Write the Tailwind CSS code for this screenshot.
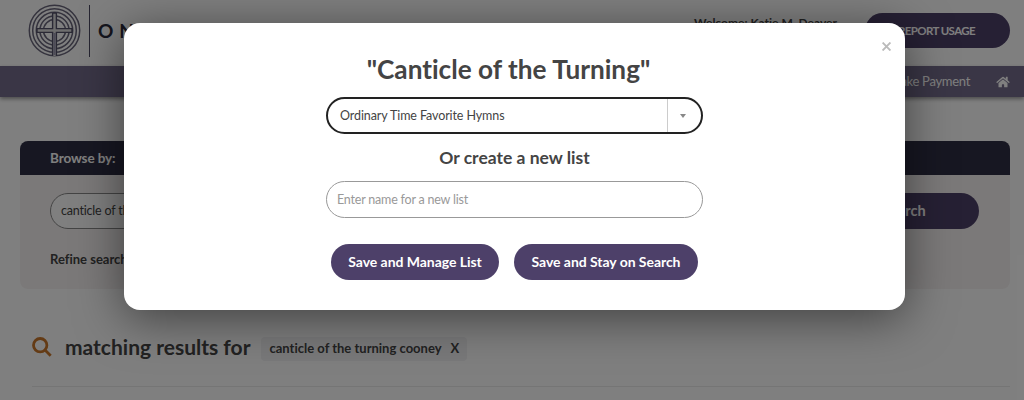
<!DOCTYPE html>
<html lang="en">
<head>
  <meta charset="UTF-8" />
  <meta name="viewport" content="width=device-width, initial-scale=1.0"/>
  <title>Add to List</title>
  <script src="https://cdn.jsdelivr.net/npm/@tailwindcss/browser@4"></script>
</head>
<body class="h-[400px] overflow-hidden bg-white font-['Lato',sans-serif] text-[#444] [font-variant-ligatures:none]">

  <!-- Header -->
  <header class="flex h-[66px] items-start justify-between pl-7 pr-[14px]">
    <div class="flex items-center pt-1">
      <svg class="size-[53px]" viewBox="0 0 53 53" fill="none" stroke="#6a677c">
        <g stroke-width="1.5">
          <circle cx="26.5" cy="26.5" r="25.2"/>
          <circle cx="26.5" cy="26.5" r="21.8"/>
          <circle cx="26.5" cy="26.5" r="18.2"/>
          <circle cx="26.5" cy="26.5" r="14.6"/>
          <circle cx="26.5" cy="26.5" r="11"/>
        </g>
        <path d="M26.5 9V52M9 26.5H44" stroke="#ddd" stroke-width="4"/>
        <path d="M24.6 9V24.6H9V28.4H24.6V52M28.4 9V24.6H44V28.4H28.4V52M24.6 9H28.4M9 24.6V28.4M44 24.6V28.4" stroke="#55526a" stroke-width="1.4"/>
        <path d="M26.5 29V51" stroke="#9a96b0" stroke-width="2"/>
      </svg>
      <div class="ml-2 h-[52px] w-px bg-[#4d4a62]"></div>
      <span class="ml-2 text-[19px] leading-none font-bold tracking-[6px] text-[#2a2a3a]">ONE LICENSE</span>
    </div>
    <div class="flex pt-[13px]">
      <span class="mr-7 text-[12px] leading-[19px] font-bold">Welcome: Katie M. Deaver</span>
      <button class="h-[35px] w-[145px] rounded-full bg-[#4d4069] pr-0.5 text-[11.5px] font-bold tracking-[-0.6px] text-white">REPORT USAGE</button>
    </div>
  </header>

  <!-- Navigation -->
  <nav class="flex h-[31px] items-center justify-end bg-[#746c8c] pr-[14px] text-[13px] tracking-[-0.3px] text-white shadow-[0_2px_4px_rgba(0,0,0,0.4)]">
    <span>Make Payment</span>
    <svg class="ml-[26px] h-3 w-[14px]" viewBox="0 0 576 512" fill="currentColor">
      <path d="M280 148 96 300v164a16 16 0 0 0 16 16h112a16 16 0 0 0 16-16v-96a16 16 0 0 1 16-16h64a16 16 0 0 1 16 16v96a16 16 0 0 0 16 16h112a16 16 0 0 0 16-16V300L296 148a12 12 0 0 0-16 0zM572 251l-84-69V44a12 12 0 0 0-12-12h-56a12 12 0 0 0-12 12v72l-89-74a48 48 0 0 0-61 0L4 251a12 12 0 0 0-1 17l25 31a12 12 0 0 0 17 2L280 107a12 12 0 0 1 16 0l235 194a12 12 0 0 0 17-2l26-31a12 12 0 0 0-2-17z"/>
    </svg>
  </nav>

  <!-- Search panel -->
  <section class="mt-11 ml-5 mr-[14px] h-[148px] overflow-hidden rounded-lg bg-[#f7f3f3]">
    <h2 class="flex h-[34px] items-center bg-[#2f2f45] px-[30px] text-[13.5px] font-bold tracking-[-0.1px] text-white">Browse by:</h2>
    <div class="mt-[18px] flex justify-between pl-[30px] pr-[31px]">
      <div class="flex h-9 w-[680px] items-center rounded-full border border-[#888] bg-white px-[10px] text-[12.5px] tracking-[-0.2px]">canticle of the turning cooney</div>
      <button class="h-9 w-[150px] rounded-full bg-[#4d4069] text-[14.5px] font-bold text-white">Search</button>
    </div>
    <p class="mt-[21px] pl-[30px] text-[13px] font-bold">Refine search by:</p>
  </section>

  <!-- Results heading -->
  <section class="ml-8 mr-[14px] mt-[45px] flex h-[53px] items-start border-b border-[#ebebeb]">
    <svg class="mt-[3px] size-5" viewBox="0 0 20 20" fill="none" stroke="#c8762a" stroke-width="2.8">
      <circle cx="8.2" cy="8.2" r="6.7"/>
      <path d="M13 13l5.700 5.700"/>
    </svg>
    <h1 class="ml-[13px] text-[21px] leading-[26px] font-bold">matching results for</h1>
    <div class="ml-[11px] mt-[3px] flex h-6 items-center rounded bg-[#f3f3f5] px-2 text-[13px] font-bold">
      canticle of the turning cooney <span class="ml-[9px]">X</span>
    </div>
  </section>

  <!-- Modal -->
  <div class="absolute inset-0 bg-black/50">
    <div class="absolute top-[23px] left-[124px] flex h-[287px] w-[781px] flex-col items-center rounded-2xl bg-white pt-[28px] shadow-[0_8px_48px_rgba(0,0,0,0.5)]">
      <svg class="absolute top-[19px] right-[14px] size-[9px]" viewBox="0 0 8 8" stroke="#bbb" stroke-width="1.7">
        <path d="M.5.5l7 7M7.500.5l-7 7"/>
      </svg>
      <h2 class="-ml-3 text-[26.2px] leading-9 font-bold">"Canticle of the Turning"</h2>
      <div class="mt-[10px] flex h-[37px] w-[377px] overflow-hidden rounded-full border-2 border-[#222] text-[12.5px]">
        <span class="flex-1 pl-3 leading-[33px] tracking-[-0.1px]">Ordinary Time Favorite Hymns</span>
        <span class="flex w-[34px] items-center justify-center border-l border-[#ccc] pr-1">
          <svg class="h-1 w-[6px]" viewBox="0 0 6 4" fill="#888"><path d="M0 0h6L3 4z"/></svg>
        </span>
      </div>
      <h3 class="mt-3 text-[17.500px] leading-6 font-bold">Or create a new list</h3>
      <div class="mt-[11px] flex h-[37px] w-[377px] items-center rounded-full border border-[#999] px-[10px] pt-px text-[12.5px] tracking-[-0.2px] text-[#999]">Enter name for a new list</div>
      <div class="mt-[26px] flex gap-[15px]">
        <button class="h-[36px] w-[168px] rounded-full bg-[#4d4069] pb-0.5 text-[14px] font-bold tracking-[-0.05px] text-white">Save and Manage List</button>
        <button class="h-[36px] w-[184px] rounded-full bg-[#4d4069] pb-0.5 text-[14px] font-bold tracking-[-0.05px] text-white">Save and Stay on Search</button>
      </div>
    </div>
  </div>
</body>
</html>
